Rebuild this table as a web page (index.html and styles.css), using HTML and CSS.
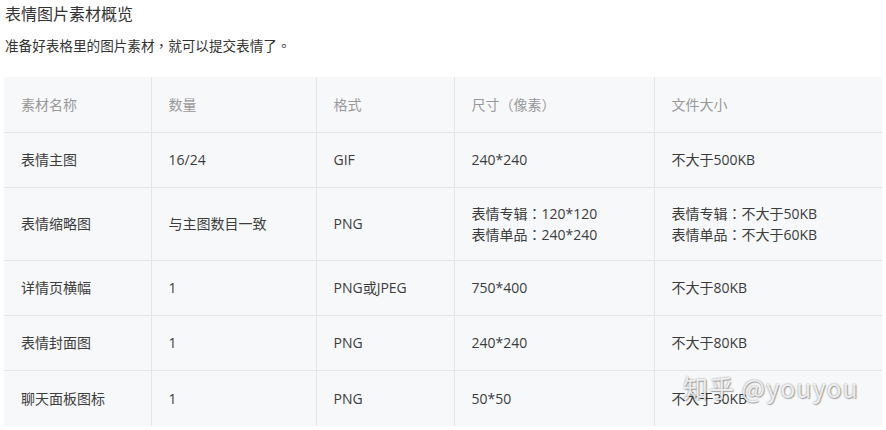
FILE: index.html
```html
<!DOCTYPE html>
<html lang="zh-CN">
<head>
<meta charset="utf-8">
<link rel="stylesheet" href="styles.css">
</head>
<body>
<div class="page">
  <h1 class="title">表情图片素材概览</h1>
  <p class="desc">准备好表格里的图片素材<span class="punct" lang="zh-TW">，</span>就可以提交表情了<span class="punct" lang="zh-TW">。</span></p>
  <table class="grid">
    <colgroup>
      <col class="c1"><col class="c2"><col class="c3"><col class="c4"><col class="c5">
    </colgroup>
    <thead>
      <tr class="head"><th>素材名称</th><th>数量</th><th>格式</th><th>尺寸<span class="punct" lang="zh-TW">（</span>像素<span class="punct" lang="zh-TW">）</span></th><th>文件大小</th></tr>
    </thead>
    <tbody>
      <tr><td>表情主图</td><td>16/24</td><td>GIF</td><td>240*240</td><td>不大于500KB</td></tr>
      <tr class="tall"><td>表情缩略图</td><td>与主图数目一致</td><td>PNG</td><td>表情专辑<span class="punct" lang="zh-TW">：</span>120*120<br>表情单品<span class="punct" lang="zh-TW">：</span>240*240</td><td>表情专辑<span class="punct" lang="zh-TW">：</span>不大于50KB<br>表情单品<span class="punct" lang="zh-TW">：</span>不大于60KB</td></tr>
      <tr><td>详情页横幅</td><td>1</td><td>PNG或JPEG</td><td>750*400</td><td>不大于80KB</td></tr>
      <tr><td>表情封面图</td><td>1</td><td>PNG</td><td>240*240</td><td>不大于80KB</td></tr>
      <tr class="last"><td>聊天面板图标</td><td>1</td><td>PNG</td><td>50*50</td><td>不大于30KB</td></tr>
    </tbody>
  </table>
  <div class="watermark">知乎 @youyou</div>
</div>
</body>
</html>
```
FILE: styles.css
```css
html, body {
  margin: 0;
  padding: 0;
  background: #fff;
}
.page {
  position: relative;
  padding: 0 4px;
  font-family: "Open Sans", "Noto Sans CJK SC", sans-serif;
  color: #333;
}
.punct {
  font-family: "Noto Sans CJK TC", "Noto Sans CJK SC", sans-serif;
}
.title {
  margin: 0;
  padding: 3px 0 0 1px;
  font-size: 16px;
  font-weight: normal;
  line-height: 22px;
  color: #333;
}
.desc {
  margin: 0;
  padding: 10px 0 0 1px;
  font-size: 13.6px;
  line-height: 20px;
  color: #333;
}
.grid {
  margin-top: 21px;
  width: 878px;
  border-collapse: collapse;
  table-layout: fixed;
  background: #f7f8fa;
  font-size: 14px;
}
.c1 { width: 147px; }
.c2 { width: 165px; }
.c3 { width: 138px; }
.c4 { width: 200px; }
.c5 { width: 228px; }
.grid th, .grid td {
  text-align: left;
  font-weight: normal;
  padding: 0 0 0 17px;
  height: 54px;
  line-height: 20px;
  vertical-align: middle;
  border-left: 1px solid #e3e5e8;
  border-bottom: 1px solid #e3e5e8;
}
.grid th:first-child, .grid td:first-child {
  border-left: none;
}
.grid th {
  color: #999;
}
.grid td {
  color: #3c3c3c;
}
.grid tr.head th {
  height: 55px;
}
.grid tr.tall td {
  height: 72px;
}
.grid tr.last td {
  border-bottom: none;
  height: 55px;
}
.watermark {
  position: absolute;
  left: 683px;
  top: 370px;
  font-family: "Noto Sans CJK SC", "Open Sans", sans-serif;
  font-size: 25px;
  line-height: 34px;
  color: rgba(255,255,255,0.85);
  text-shadow: 0 0 2px rgba(0,0,0,0.45), 1px 1px 1px rgba(0,0,0,0.25);
  letter-spacing: 1px;
}
```
